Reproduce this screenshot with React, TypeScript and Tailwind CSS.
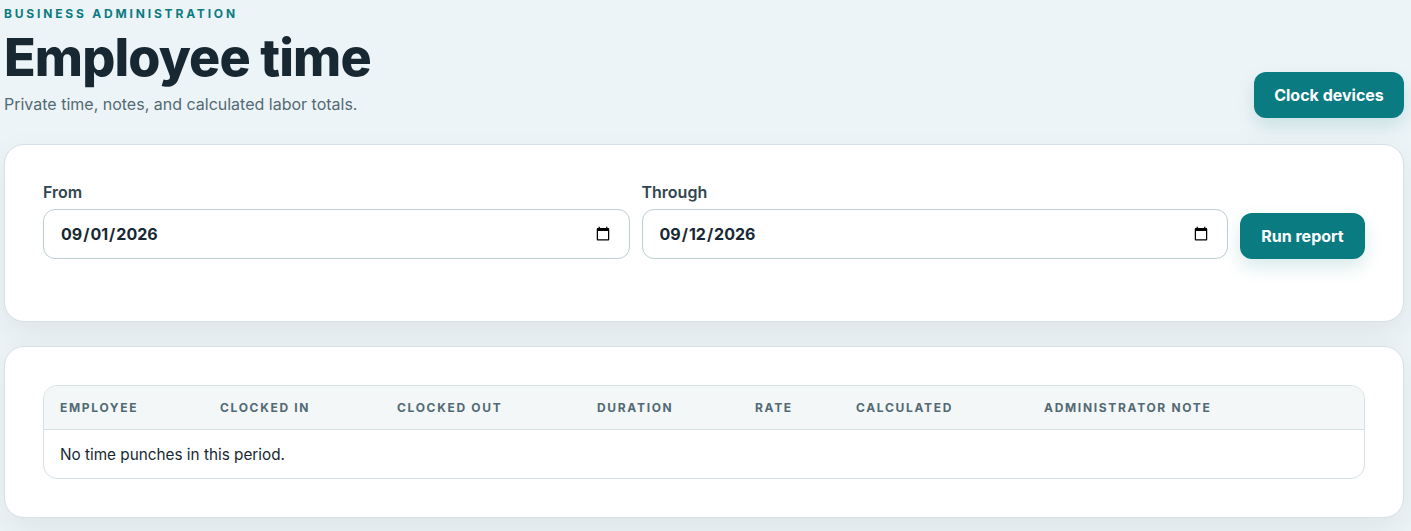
import React from 'react';

const columns = [
  { label: 'Employee', width: 'w-[160px]' },
  { label: 'Clocked in', width: 'w-[177px]' },
  { label: 'Clocked out', width: 'w-[200px]' },
  { label: 'Duration', width: 'w-[158px]' },
  { label: 'Rate', width: 'w-[101px]' },
  { label: 'Calculated', width: 'w-[188px]' },
  { label: 'Administrator note', width: '' },
];

const cardClass = 'bg-white rounded-[20px] border border-[#d5e1e5] shadow-[0_12px_32px_rgba(23,40,51,0.07)]';
const buttonClass = 'h-[46px] rounded-[12px] bg-[#0b7b82] font-bold text-[16px] text-white shadow-[0_8px_18px_rgba(11,122,127,0.16)]';

const DateField: React.FC<{ label: string; value: string }> = ({ label, value }) => (
  <label className="flex-1 min-w-0 flex flex-col gap-[8px]">
    <span className="text-[16px] leading-[18px] font-semibold text-[#2f4650]">{label}</span>
    <input
      type="date"
      defaultValue={value}
      className="w-full h-[50px] pl-[16px] pr-[16px] bg-white border border-[#bccdd4] rounded-[12px] text-[16px] font-bold text-[#172833] outline-none"
    />
  </label>
);

export default function App() {
  return (
    <div className="min-h-[531px] bg-[#edf4f7] pl-[4px] pr-[7px] pb-[13px] font-['Inter',sans-serif] text-[#172833] overflow-hidden">
      <header className="flex items-end justify-between h-[118px]">
        <div className="pb-[2px]">
          <p className="text-[12px] leading-[14px] font-bold uppercase tracking-[0.235em] text-[#0b7b82]">Business administration</p>
          <h1 className="mt-[8px] text-[52px] leading-[58px] font-extrabold tracking-[-0.017em] text-[#172833]">Employee time</h1>
          <p className="mt-[5px] text-[16px] leading-[24px] text-[#526a74]">Private time, notes, and calculated labor totals.</p>
        </div>
        <button type="button" className={`${buttonClass} w-[150px]`}>Clock devices</button>
      </header>

      <section className={`${cardClass} mt-[26px] h-[178px] px-[38px] pt-[38px]`}>
        <form className="flex items-end gap-[12px]">
          <DateField label="From" value="2026-09-01" />
          <DateField label="Through" value="2026-09-12" />
          <button type="button" className={`${buttonClass} w-[125px] shrink-0`}>Run report</button>
        </form>
      </section>

      <section className={`${cardClass} mt-[24px] h-[172px] px-[38px] pt-[38px]`}>
        <div className="border border-[#d5e1e5] rounded-[14px] overflow-hidden">
          <table className="w-full table-fixed border-collapse">
            <thead>
              <tr className="bg-[#f3f7f8] border-b border-[#d5e1e5]">
                {columns.map((col) => (
                  <th
                    key={col.label}
                    className={`${col.width} h-[43px] px-[16px] pt-[1px] text-left text-[12px] font-bold uppercase tracking-[0.14em] text-[#526a74]`}
                  >
                    {col.label}
                  </th>
                ))}
              </tr>
            </thead>
            <tbody>
              <tr>
                <td colSpan={7} className="h-[49px] px-[16px] pt-[3px] text-[15.3px] text-[#172833]">No time punches in this period.</td>
              </tr>
            </tbody>
          </table>
        </div>
      </section>
    </div>
  );
}
